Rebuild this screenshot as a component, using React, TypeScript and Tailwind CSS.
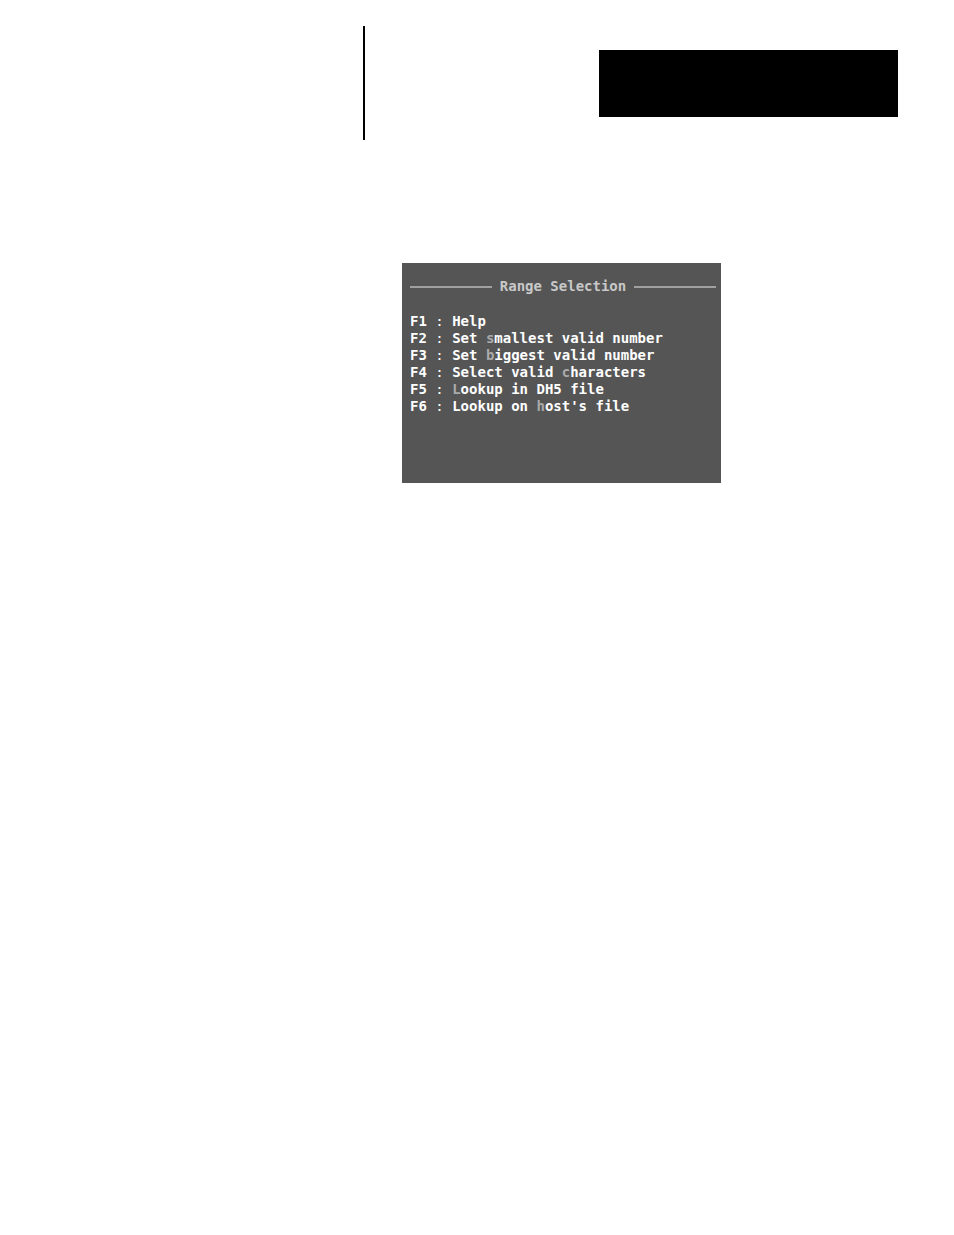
type MenuItem = {
  fkey: string;
  before: string;
  hot: string;
  after: string;
};

const items: MenuItem[] = [
  { fkey: "F1", before: "Help", hot: "", after: "" },
  { fkey: "F2", before: "Set ", hot: "s", after: "mallest valid number" },
  { fkey: "F3", before: "Set ", hot: "b", after: "iggest valid number" },
  { fkey: "F4", before: "Select valid ", hot: "c", after: "haracters" },
  { fkey: "F5", before: "", hot: "L", after: "ookup in DH5 file" },
  { fkey: "F6", before: "Lookup on ", hot: "h", after: "ost's file" },
];

function PageHeader() {
  return (
    <header className="flex items-start justify-between">
      <div className="ml-[363px] h-[114px] w-0.5 bg-black" />
      <div className="mt-6 mr-14 h-[67px] w-[299px] bg-black" />
    </header>
  );
}

function RangeSelection() {
  return (
    <section className="mt-[123px] ml-[402px] w-[319px] bg-[#555555] pt-[15px] pr-[5px] pb-[68px] pl-2 font-['DejaVu_Sans_Mono',monospace] text-[14px] leading-[17px]">
      <div className="flex items-center gap-2 text-[#c8c8c8]">
        <span className="h-0.5 flex-1 bg-[#a0a0a0]" />
        <h1 className="font-bold whitespace-pre">Range Selection</h1>
        <span className="h-0.5 flex-1 bg-[#a0a0a0]" />
      </div>
      <ul className="mt-[18px] font-bold text-white">
        {items.map((item) => (
          <li key={item.fkey} className="flex">
            <button type="button" className="text-left whitespace-pre">
              {item.fkey} <span className="font-normal">:</span> {item.before}
              <span className="text-[#aaaaaa]">{item.hot}</span>
              {item.after}
            </button>
          </li>
        ))}
      </ul>
    </section>
  );
}

export default function App() {
  return (
    <main className="min-h-screen bg-white pt-[26px]">
      <PageHeader />
      <RangeSelection />
    </main>
  );
}
